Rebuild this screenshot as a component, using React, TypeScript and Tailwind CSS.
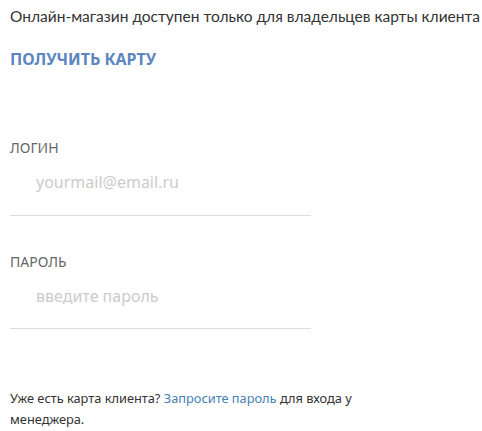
export default function App() {
  return (
    <div className="px-[10px] pt-[6px] text-[#333] font-['Noto_Sans',sans-serif]">
      <p className="whitespace-nowrap font-['Lato',sans-serif] text-[15.5px] leading-[20px]">
        Онлайн-магазин доступен только для владельцев карты клиента
      </p>
      <a className="mt-[23px] block text-[16px] leading-[20px] font-bold text-[#5b86c0]">
        ПОЛУЧИТЬ КАРТУ
      </a>

      <form className="mt-[70px] w-[301px]">
        <label className="block">
          <span className="block text-[14px] leading-[18px] text-[#666]">ЛОГИН</span>
          <input
            className="mt-[8px] block h-[51px] w-full border-b border-[#ddd] pl-[26px] pb-[16px] text-[16px] outline-none placeholder:text-[#ccc]"
            placeholder="yourmail@email.ru"
          />
        </label>
        <label className="mt-[37px] block">
          <span className="block text-[14px] leading-[18px] text-[#666]">ПАРОЛЬ</span>
          <input
            type="password"
            className="mt-[8px] block h-[50px] w-full border-b border-[#ddd] pl-[26px] pb-[16px] text-[16px] outline-none placeholder:text-[#ccc]"
            placeholder="введите пароль"
          />
        </label>
      </form>

      <p className="mt-[59px] text-[12.8px] leading-[21px] text-[#333]">
        Уже есть карта клиента? <a className="text-[#4a80b8]">Запросите пароль</a> для входа у
        <br />
        менеджера.
      </p>
    </div>
  );
}
